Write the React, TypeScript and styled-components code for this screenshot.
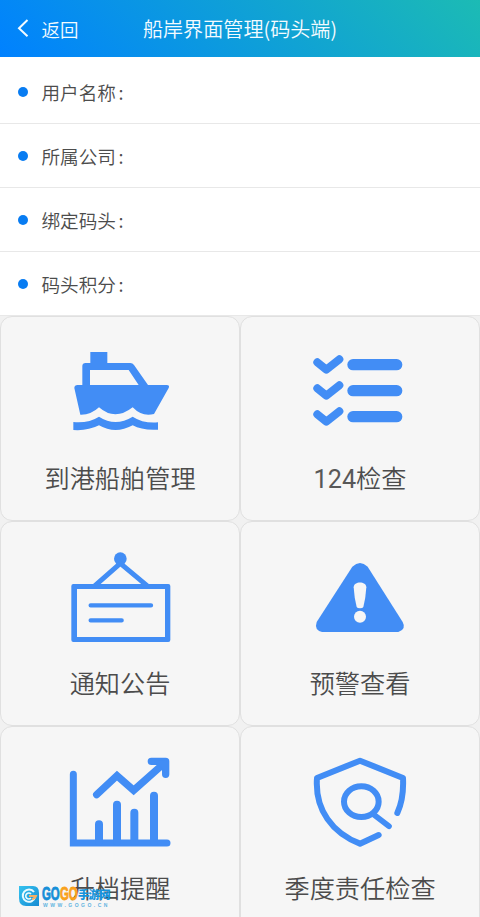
import React from "react";
import styled, { createGlobalStyle } from "styled-components";

const GlobalStyle = createGlobalStyle`
  * { box-sizing: border-box; }
  html, body { margin: 0; padding: 0; }
  body {
    overflow: hidden;
    background: #f1f1f1;
    font-family: Roboto, "Noto Sans CJK SC", sans-serif;
    font-weight: 400;
  }
`;

const Screen = styled.div`
  position: relative;
  width: 480px;
  height: 917px;
  overflow: hidden;
`;

const Header = styled.header`
  height: 57px;
  display: grid;
  grid-template-columns: 120px 240px 120px;
  align-items: center;
  color: #f4fbff;
  background: linear-gradient(45deg, #0081ff, #1cbbb4);
`;

const Back = styled.button`
  display: flex;
  align-items: center;
  gap: 12.5px;
  padding: 2px 0 0 17px;
  border: 0;
  background: none;
  color: inherit;
  font: inherit;
  font-family: "Noto Sans CJK SC", sans-serif;
  font-size: 18.5px;
  font-weight: 350;
  line-height: 27px;

  svg { margin-top: -4px; }
`;

const Title = styled.h1`
  margin: 0;
  font-family: "Noto Sans CJK SC", sans-serif;
  font-size: 20.1px;
  font-weight: 350;
  line-height: 30px;
  text-align: center;
  white-space: nowrap;
`;

const InfoList = styled.ul`
  margin: 0;
  padding: 3px 0 0;
  list-style: none;
  background: #fff;
`;

const InfoRow = styled.li`
  height: 64px;
  display: flex;
  align-items: center;
  padding: 1px 0 0 18px;
  border-bottom: 1px solid #e8e8e8;
  color: #4c4c4c;
  font-family: "Noto Sans CJK SC", sans-serif;
  font-size: 18.6px;
  font-weight: 350;
  line-height: 28px;
`;

const Dot = styled.i`
  width: 10px;
  height: 10px;
  margin: -1px 13.5px 0 0;
  border-radius: 50%;
  background: #087cf2;
`;

const Colon = styled.span`
  padding-left: 2.5px;
  font-family: "Noto Sans CJK SC", sans-serif;
`;

const Grid = styled.main`
  display: grid;
  grid-template-columns: 240px 240px;
  grid-auto-rows: 204.8px;
`;

const Tile = styled.section`
  display: flex;
  flex-direction: column;
  align-items: center;
  padding-top: 23px;
  border: 1px solid #e0e0e0;
  border-radius: 12px;
  background: #f6f6f6;
`;

const TileIcon = styled.svg`
  flex: none;
  width: 120px;
  height: 110px;
  color: #428df5;
  fill: none;
  stroke: currentColor;
  stroke-linecap: round;
  stroke-linejoin: round;
`;

const TileLabel = styled.span`
  margin-top: 11px;
  color: #4c4c4c;
  font-family: Roboto, "Noto Sans CJK SC", sans-serif;
  font-size: 25.2px;
  font-weight: 350;
  line-height: 38px;
  white-space: nowrap;
`;

const Digits = styled.span`
  font-weight: 400;
  color: #585858;
`;

const Watermark = styled.div`
  position: absolute;
  left: 18px;
  top: 885px;
  display: flex;
  gap: 2px;
`;

const MarkText = styled.div`
  display: flex;
  flex-direction: column;
`;

const MarkName = styled.div`
  display: flex;
  align-items: center;
  height: 17px;
`;

const MarkLatin = styled.span<{ $color: string }>`
  width: 18px;
  color: ${(p) => p.$color};
  font: 700 19px/17px "Liberation Sans", sans-serif;
  transform: scaleX(0.6);
  transform-origin: left;
  -webkit-text-stroke: 0.9px ${(p) => p.$color};
`;

const MarkHan = styled.span`
  color: #1593dc;
  font: 900 11.5px/16px "Noto Sans CJK SC", sans-serif;
  letter-spacing: -0.9px;
  white-space: nowrap;
`;

const MarkUrl = styled.div`
  color: #62b4df;
  font: 700 5px/6px "Liberation Sans", sans-serif;
  padding-left: 1px;
  letter-spacing: 2.5px;
  white-space: nowrap;
`;

const ShipIcon = () => (
  <TileIcon viewBox="0 0 360 330">
    <g fill="currentColor" stroke="none">
      <path
        fillRule="evenodd"
        d="M91 36H142V69H211Q218 69 222 75L264 135H320Q330 135 326 144L282 222Q247 232 218 202Q165 244 117 202Q93 225 61 224L43 144Q43 135 53 135H67V78Q67 69 77 69H91ZM90 90V135H236L206 90Z"
      />
      <path d="M40 246Q86 250 117 230Q166 262 218 230Q250 251 294 247V269Q247 272 218 256Q166 284 117 256Q84 273 40 270Z" />
    </g>
  </TileIcon>
);

const ChecklistIcon = () => (
  <TileIcon viewBox="0 0 360 330">
    {[0, 78, 156].map((y) => (
      <g key={y} transform={`translate(0 ${y})`}>
        <path d="M52 67L79 89L118 58" strokeWidth="24" />
        <path d="M159 74H290" strokeWidth="34" />
      </g>
    ))}
  </TileIcon>
);

const NoticeIcon = () => (
  <TileIcon viewBox="0 0 360 330">
    <circle cx="181" cy="41" r="19" fill="currentColor" stroke="none" />
    <path d="M105 122L181 55L261 122" strokeWidth="15" />
    <path
      d="M40 117H325Q331 117 331 123V285Q331 291 325 291H40Q34 291 34 285V123Q34 117 40 117ZM51 132V276H315V132Z"
      fill="currentColor"
      fillRule="evenodd"
      stroke="none"
    />
    <path d="M92 181H273M92 226H185" strokeWidth="13" />
  </TileIcon>
);

const WarningIcon = () => (
  <TileIcon viewBox="0 0 360 330">
    <path
      d="M157 65Q180 43 203 65L308 231Q320 253 295 261H66Q42 255 50 231Z"
      fill="currentColor"
      stroke="none"
    />
    <path
      d="M161 127C161 108 199 108 199 127Q197 160 190 186Q188 190 180 190Q172 190 170 186Q163 160 161 127Z"
      fill="#f6f6f6"
      stroke="none"
    />
    <circle cx="180" cy="215" r="18" fill="#f6f6f6" stroke="none" />
  </TileIcon>
);

const ChartIcon = () => (
  <TileIcon viewBox="0 0 360 330">
    <path d="M40 73V279H321" strokeWidth="21" strokeLinejoin="miter" />
    <path d="M117 274V223M171 274V164M223 274V188M282 274V137" strokeWidth="24" />
    <path d="M110 134L171 77L221 121L309 43" strokeWidth="22" strokeLinejoin="miter" />
    <path d="M274 34H317V73" strokeWidth="22" />
    <path d="M284 34L317 67V34Z" fill="currentColor" strokeWidth="4" />
  </TileIcon>
);

const ShieldIcon = () => (
  <TileIcon viewBox="0 0 360 330">
    <path
      d="M236 255L180 281C98 249 44 180 51 84L180 32L309 84Q312 145 292 189"
      strokeWidth="18"
      strokeLinejoin="round"
    />
    <ellipse cx="184" cy="155" rx="52" ry="46" strokeWidth="18" />
    <path d="M222 194L267 229" strokeWidth="17" />
  </TileIcon>
);

const fields = ["用户名称", "所属公司", "绑定码头", "码头积分"];

const tiles = [
  { count: "", label: "到港船舶管理", Icon: ShipIcon },
  { count: "124", label: "检查", Icon: ChecklistIcon },
  { count: "", label: "通知公告", Icon: NoticeIcon },
  { count: "", label: "预警查看", Icon: WarningIcon },
  { count: "", label: "升档提醒", Icon: ChartIcon },
  { count: "", label: "季度责任检查", Icon: ShieldIcon },
];

export default function App() {
  return (
    <Screen lang="zh-CN">
      <GlobalStyle />
      <Header>
        <Back>
          <svg width="12" height="20" viewBox="0 0 12 20" fill="none" stroke="currentColor" strokeWidth="2">
            <path d="M10.5 2L2 10.2L10.5 18.3" />
          </svg>
          返回
        </Back>
        <Title>船岸界面管理(码头端)</Title>
      </Header>
      <InfoList>
        {fields.map((field) => (
          <InfoRow key={field}>
            <Dot />
            {field}
            <Colon>:</Colon>
          </InfoRow>
        ))}
      </InfoList>
      <Grid>
        {tiles.map(({ count, label, Icon }) => (
          <Tile key={label}>
            <Icon />
            <TileLabel>
              {count && <Digits>{count}</Digits>}
              {label}
            </TileLabel>
          </Tile>
        ))}
      </Grid>
      <Watermark>
        <svg width="22" height="22" viewBox="0 0 22 22">
          <defs>
            <linearGradient id="mark" x1="0" y1="0" x2="1" y2="1">
              <stop offset="0" stopColor="#35c3ef" />
              <stop offset="1" stopColor="#168bd3" />
            </linearGradient>
          </defs>
          <path d="M1 1H15Q21 1 21 8V21H8Q1 21 1 13Z" fill="url(#mark)" />
          <path d="M16 7A6.2 6.2 0 1 0 17 12" fill="none" stroke="#e9faff" strokeWidth="2" />
          <path d="M13 9A3 3 0 1 0 13 13" fill="none" stroke="#e9faff" strokeWidth="1.6" />
          <path d="M11 11H18Q17 14 14 14" fill="none" stroke="#f4b064" strokeWidth="2" />
        </svg>
        <MarkText>
          <MarkName>
            <MarkLatin $color="#168fd8">GO</MarkLatin>
            <MarkLatin $color="#f9a21b">GO</MarkLatin>
            <MarkHan>手游网</MarkHan>
          </MarkName>
          <MarkUrl>WWW.GOGO.CN</MarkUrl>
        </MarkText>
      </Watermark>
    </Screen>
  );
}
